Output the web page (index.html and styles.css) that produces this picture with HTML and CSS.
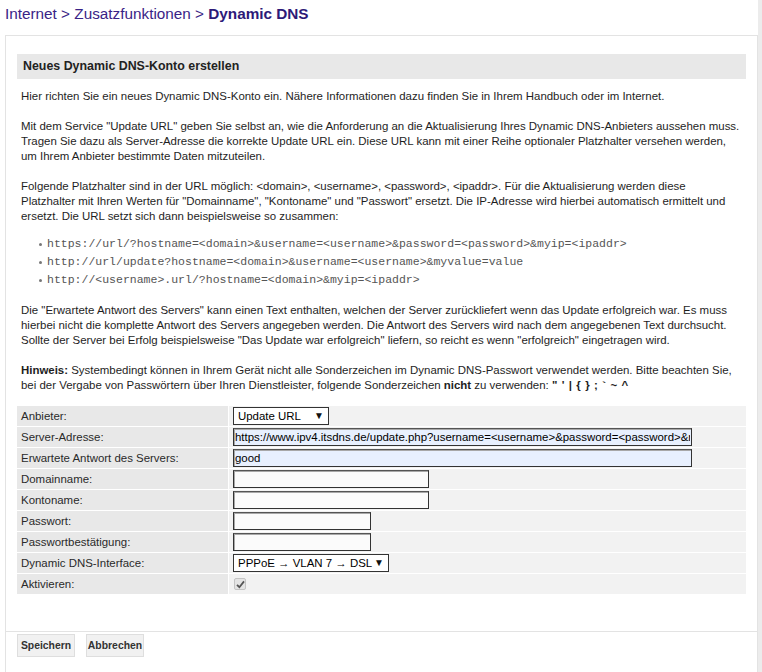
FILE: index.html
```html
<!DOCTYPE html>
<html lang="de">
<head>
<meta charset="utf-8">
<title>Dynamic DNS</title>
<link rel="stylesheet" href="styles.css">
</head>
<body>
<div class="page">
  <h1 class="crumbs">Internet &gt; Zusatzfunktionen &gt; <b>Dynamic DNS</b></h1>
  <div class="panel">
    <div class="content">
      <h2 class="box-title">Neues Dynamic DNS-Konto erstellen</h2>
      <p class="txt">Hier richten Sie ein neues Dynamic DNS-Konto ein. Nähere Informationen dazu finden Sie in Ihrem Handbuch oder im Internet.</p>
      <p class="txt">Mit dem Service "Update URL" geben Sie selbst an, wie die Anforderung an die Aktualisierung Ihres Dynamic DNS-Anbieters aussehen muss. Tragen Sie dazu als Server-Adresse die korrekte Update URL ein. Diese URL kann mit einer Reihe optionaler Platzhalter versehen werden, um Ihrem Anbieter bestimmte Daten mitzuteilen.</p>
      <p class="txt">Folgende Platzhalter sind in der URL möglich: &lt;domain&gt;, &lt;username&gt;, &lt;password&gt;, &lt;ipaddr&gt;. Für die Aktualisierung werden diese Platzhalter mit Ihren Werten für "Domainname", "Kontoname" und "Passwort" ersetzt. Die IP-Adresse wird hierbei automatisch ermittelt und ersetzt. Die URL setzt sich dann beispielsweise so zusammen:</p>
      <ul class="urls">
        <li>https://url/?hostname=&lt;domain&gt;&amp;username=&lt;username&gt;&amp;password=&lt;password&gt;&amp;myip=&lt;ipaddr&gt;</li>
        <li>http://url/update?hostname=&lt;domain&gt;&amp;username=&lt;username&gt;&amp;myvalue=value</li>
        <li>http://&lt;username&gt;.url/?hostname=&lt;domain&gt;&amp;myip=&lt;ipaddr&gt;</li>
      </ul>
      <p class="txt">Die "Erwartete Antwort des Servers" kann einen Text enthalten, welchen der Server zurückliefert wenn das Update erfolgreich war. Es muss hierbei nicht die komplette Antwort des Servers angegeben werden. Die Antwort des Servers wird nach dem angegebenen Text durchsucht. Sollte der Server bei Erfolg beispielsweise "Das Update war erfolgreich" liefern, so reicht es wenn "erfolgreich" eingetragen wird.</p>
      <p class="txt"><b>Hinweis:</b> Systembedingt können in Ihrem Gerät nicht alle Sonderzeichen im Dynamic DNS-Passwort verwendet werden. Bitte beachten Sie, bei der Vergabe von Passwörtern über Ihren Dienstleister, folgende Sonderzeichen <b>nicht</b> zu verwenden: <b class="chars">" ' | { } ; ` ~ ^</b></p>

      <table class="form">
        <tr>
          <td class="lbl">Anbieter:</td>
          <td class="val"><span class="sel sel-provider"><span class="sel-text">Update URL</span><span class="arrow">▼</span></span></td>
        </tr>
        <tr>
          <td class="lbl">Server-Adresse:</td>
          <td class="val"><input class="inp inp-wide auto" type="text" value="https://www.ipv4.itsdns.de/update.php?username=&lt;username&gt;&amp;password=&lt;password&gt;&amp;myip=&lt;ipaddr&gt;"></td>
        </tr>
        <tr>
          <td class="lbl">Erwartete Antwort des Servers:</td>
          <td class="val"><input class="inp inp-wide auto" type="text" value="good"></td>
        </tr>
        <tr>
          <td class="lbl">Domainname:</td>
          <td class="val"><input class="inp inp-mid" type="text"></td>
        </tr>
        <tr>
          <td class="lbl">Kontoname:</td>
          <td class="val"><input class="inp inp-mid" type="text"></td>
        </tr>
        <tr>
          <td class="lbl">Passwort:</td>
          <td class="val"><input class="inp inp-short" type="password"></td>
        </tr>
        <tr>
          <td class="lbl">Passwortbestätigung:</td>
          <td class="val"><input class="inp inp-short" type="password"></td>
        </tr>
        <tr>
          <td class="lbl">Dynamic DNS-Interface:</td>
          <td class="val"><span class="sel sel-iface"><span class="sel-text">PPPoE → VLAN 7 → DSL</span><span class="arrow">▼</span></span></td>
        </tr>
        <tr>
          <td class="lbl">Aktivieren:</td>
          <td class="val"><span class="check"><svg width="9" height="9" viewBox="0 0 9 9"><path d="M1 4.8 L3.4 7.2 L8 1.4" fill="none" stroke="#555" stroke-width="1.8"/></svg></span></td>
        </tr>
      </table>
    </div>
    <div class="footer">
      <button class="btn" type="button">Speichern</button>
      <button class="btn" type="button">Abbrechen</button>
    </div>
  </div>
</div>
</body>
</html>
```
FILE: styles.css
```css
html, body {
  margin: 0;
  padding: 0;
  background: #fff;
}
body {
  font-family: "Liberation Sans", Arial, sans-serif;
  font-size: 11.45px;
  color: #1e1e1e;
  overflow: hidden;
}
.page {
  padding: 5px 0 0 5px;
  border-right: 4px solid #ececec;
  min-height: 672px;
  box-sizing: border-box;
}
.crumbs {
  margin: 0;
  font-size: 15.3px;
  line-height: 18px;
  font-weight: normal;
  color: #3a2386;
}
.crumbs b {
  color: #2d1a78;
}
.panel {
  margin-top: 12px;
  border: 1px solid #e3e3e3;
  border-bottom: none;
}
.content {
  padding: 18px 11px 36px 11px;
}
.box-title {
  margin: 0 0 10px 0;
  background: #e8e8e8;
  height: 25px;
  line-height: 25px;
  padding-left: 6px;
  font-size: 12.4px;
  font-weight: bold;
  color: #222;
}
.txt {
  margin: 0 0 15px 0;
  padding: 0 4px;
  line-height: 15px;
}
.chars {
  letter-spacing: 0.6px;
}
.urls {
  margin: -4px 4px 14px 4px;
  padding: 0;
  list-style: none;
  font-family: "Liberation Mono", "Courier New", monospace;
  font-size: 11.5px;
  line-height: 18px;
  color: #555;
}
.urls li {
  display: flex;
  align-items: center;
  padding-left: 18px;
}
.urls li::before {
  content: "";
  flex: none;
  width: 3px;
  height: 3px;
  border-radius: 50%;
  background: #777;
  margin-right: 5px;
}
.form {
  width: calc(100% + 2px);
  margin: -3px -1px 0 -1px;
  border-collapse: separate;
  border-spacing: 1px;
}
.form td {
  height: 20px;
  padding: 0;
  vertical-align: middle;
}
.lbl {
  width: 207px;
  background: #e8e8e8;
  padding-left: 4px !important;
  color: #2a2a2a;
}
.val {
  background: #f2f2f2;
  padding-left: 4px !important;
  line-height: 0;
}
.inp {
  box-sizing: border-box;
  height: 18px;
  margin: 0;
  padding: 0 1px;
  border: 1px solid #333;
  border-top-color: #555;
  box-shadow: inset 1px 1px 0 #a8a8a8;
  background: #fbfbfb;
  font-family: "Liberation Sans", Arial, sans-serif;
  font-size: 11.45px;
  color: #000;
  vertical-align: middle;
  outline: none;
}
.inp.auto {
  background: #e8f0fe;
}
.inp-wide { width: 459px; }
.inp-mid { width: 196px; }
.inp-short { width: 138px; }
.sel {
  position: relative;
  display: inline-flex;
  align-items: center;
  box-sizing: border-box;
  height: 18px;
  padding: 0 0 0 4px;
  border: 1px solid #333;
  background: #fff;
  line-height: 16px;
  font-size: 11.45px;
  color: #000;
  vertical-align: middle;
}
.sel-provider { width: 96px; }
.sel-iface { width: 156px; }
.sel .arrow {
  position: absolute;
  right: 4px;
  top: 0;
  font-size: 10px;
  line-height: 16px;
  color: #111;
}
.check {
  display: inline-flex;
  align-items: center;
  justify-content: center;
  box-sizing: border-box;
  width: 12px;
  height: 12px;
  margin-left: 1px;
  border: 1px solid #c4c4c4;
  border-radius: 2px;
  background: #e4e4e4;
  vertical-align: middle;
}
.footer {
  border-top: 1px solid #e3e3e3;
  padding: 2px 11px 20px 11px;
  display: flex;
  gap: 11px;
}
.btn {
  box-sizing: border-box;
  width: 58px;
  height: 23px;
  padding: 0;
  border: 1px solid #dedede;
  background: #f1f1f1;
  font-family: "Liberation Sans", Arial, sans-serif;
  font-size: 10.4px;
  font-weight: bold;
  color: #333;
}
```
